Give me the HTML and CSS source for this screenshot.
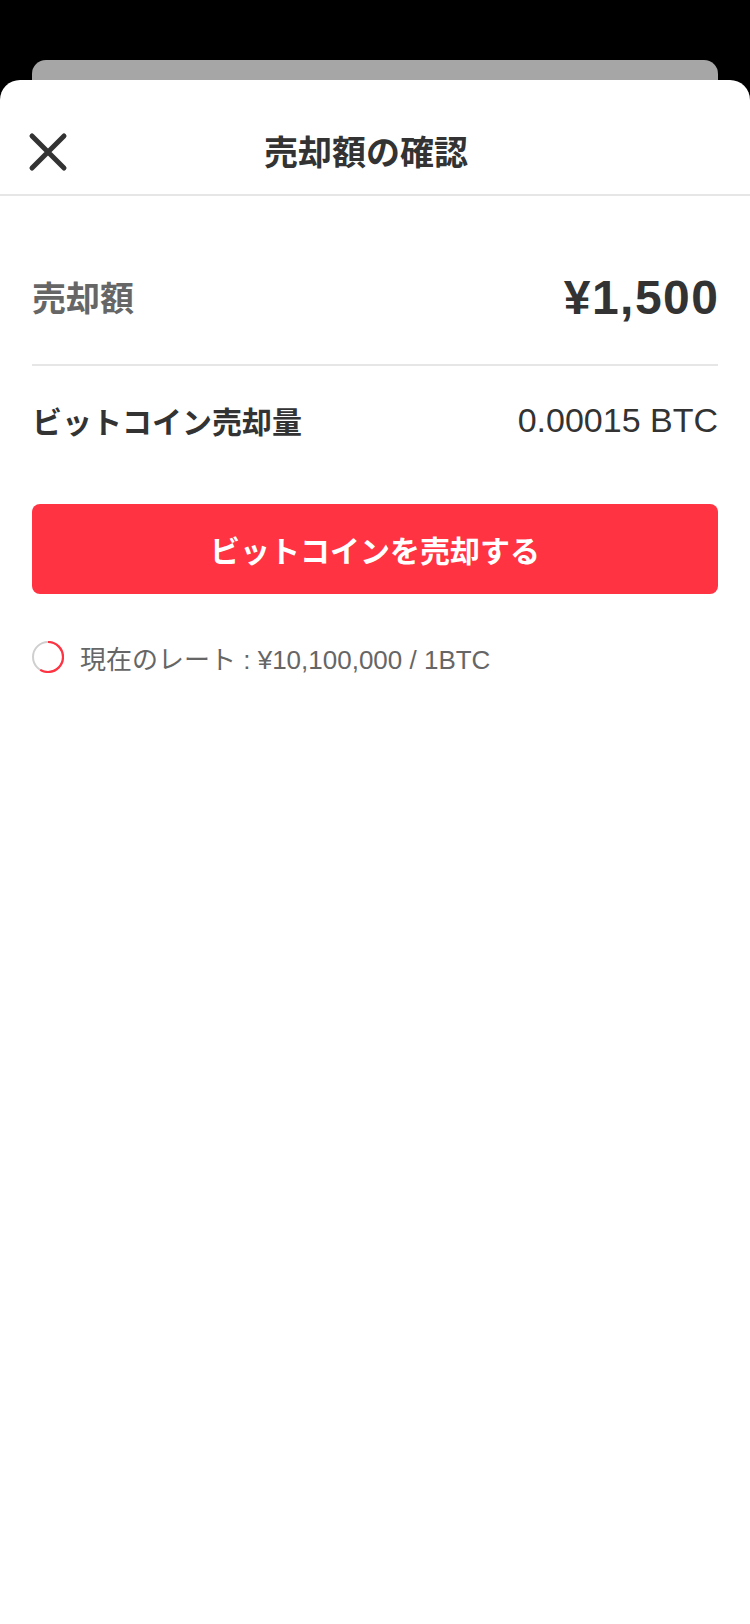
FILE: index.html
```html
<!DOCTYPE html>
<html lang="ja">
<head>
    <meta charset="UTF-8">
    <title>売却額の確認</title>
    <link rel="stylesheet" href="styles.css">
</head>
<body>
    <div class="backdrop-card"></div>
    <div class="sheet">
        <header class="sheet-header">
            <button class="close-button" aria-label="閉じる">
                <svg width="40" height="40" viewBox="0 0 40 40">
                    <path d="M4 4 L36 36 M36 4 L4 36" stroke="#333" stroke-width="5" stroke-linecap="round" fill="none"/>
                </svg>
            </button>
            <h1 class="sheet-title">売却額の確認</h1>
            <div class="header-spacer"></div>
        </header>

        <div class="content">
            <div class="row row-total">
                <span class="row-label">売却額</span>
                <span class="row-amount">¥1,500</span>
            </div>
            <div class="row row-btc">
                <span class="row-label-dark">ビットコイン売却量</span>
                <span class="row-value">0.00015 BTC</span>
            </div>

            <button class="sell-button">ビットコインを売却する</button>

            <div class="rate-line">
                <svg class="rate-spinner" width="32" height="32" viewBox="0 0 32 32">
                    <circle cx="16" cy="16" r="15" stroke="#cfcfcf" stroke-width="2" fill="none"/>
                    <!-- 赤い進捗アーク -->
                    <circle cx="16" cy="16" r="15" stroke="#ff3341" stroke-width="2.2" fill="none"
                        stroke-dasharray="55 100" transform="rotate(-90 16 16)"/>
                </svg>
                <span class="rate-text">現在のレート : ¥10,100,000 / 1BTC</span>
            </div>
        </div>
    </div>
</body>
</html>
```

FILE: styles.css
```css
/* 基本スタイル */
body {
    margin: 0;
    padding: 0;
    background-color: #000;
    font-family: 'Liberation Sans', 'Noto Sans CJK JP', sans-serif;
    color: #333;
}
/* 背面のカード */
.backdrop-card {
    margin: 60px 32px 0;
    height: 20px;
    background-color: #a6a6a6;
    border-radius: 14px 14px 0 0;
}
/* シート */
.sheet {
    background-color: #fff;
    border-radius: 20px 20px 0 0;
    min-height: 1544px;
    padding-top: 26px;
    box-sizing: border-box;
}
/* ヘッダー */
.sheet-header {
    display: flex;
    align-items: center;
    height: 88px;
    padding: 0 24px;
    border-bottom: 2px solid #e6e6e6;
}
.close-button {
    width: 46px;
    height: 46px;
    padding: 4px 0 0 4px;
    border: none;
    background: none;
    display: flex;
    align-items: center;
    cursor: pointer;
}
.sheet-title {
    flex: 1;
    margin: 0;
    text-align: center;
    font-size: 34px;
    font-weight: 700;
    color: #333;
}
.header-spacer {
    width: 64px;
}
/* 内容 */
.content {
    padding: 34px 32px 0;
    display: flex;
    flex-direction: column;
}
.row {
    display: flex;
    align-items: center;
    justify-content: space-between;
}
.row-total {
    height: 134px;
    border-bottom: 2px solid #e6e6e6;
}
.row-label {
    font-size: 34px;
    font-weight: 700;
    color: #666;
    margin-bottom: 2px;
}
.row-amount {
    font-size: 48px;
    font-weight: 700;
    letter-spacing: 1.5px;
    margin-right: -1.5px;
    color: #333;
}
.row-btc {
    height: 108px;
}
.row-label-dark {
    font-size: 30px;
    font-weight: 700;
    color: #333;
}
.row-value {
    font-size: 34px;
    color: #333;
}
/* 売却ボタン */
.sell-button {
    margin-top: 30px;
    height: 90px;
    border: none;
    border-radius: 8px;
    background-color: #ff3341;
    color: #fff;
    font-family: inherit;
    font-size: 30px;
    font-weight: 700;
    cursor: pointer;
}
/* 現在のレート */
.rate-line {
    display: flex;
    align-items: center;
    gap: 16px;
    margin-top: 47px;
    height: 32px;
}
.rate-text {
    font-size: 26px;
    color: #666;
}
```
